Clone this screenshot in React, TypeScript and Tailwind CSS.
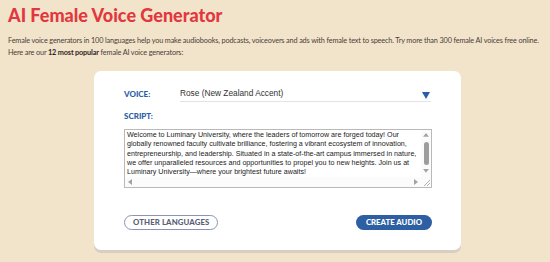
import React from "react";

const scriptLines = [
  "Welcome to Luminary University, where the leaders of tomorrow are forged today! Our",
  "globally renowned faculty cultivate brilliance, fostering a vibrant ecosystem of innovation,",
  "entrepreneurship, and leadership. Situated in a state-of-the-art campus immersed in nature,",
  "we offer unparalleled resources and opportunities to propel you to new heights. Join us at",
  "Luminary University\u2014where your brightest future awaits!",
];

// Fake textarea scrollbar pieces
const ScrollArrow: React.FC<{ dir: "up" | "down" | "left" | "right" }> = ({ dir }) => {
  const paths = {
    up: "M1 5 L4 1 L7 5 Z",
    down: "M1 2 L4 6 L7 2 Z",
    left: "M5 1 L1 4 L5 7 Z",
    right: "M2 1 L6 4 L2 7 Z",
  };
  return (
    <svg width="8" height="8" viewBox="0 0 8 8" className="block">
      <path d={paths[dir]} fill="#a3a3a3" />
    </svg>
  );
};

export default function App() {
  return (
    <div
      className="w-[550px] h-[262px] overflow-hidden bg-[#f2e4cb] px-2 pt-[4px]"
      style={{ fontFamily: "Lato, 'Open Sans', sans-serif" }}
    >
      <h1 className="text-[18px] leading-[22px] font-black text-[#e2383d]">
        AI Female Voice Generator
      </h1>
      <p className="mt-[9px] text-[7.3px] leading-[12px] tracking-[-0.15px] text-[#4b4038] whitespace-nowrap">
        Female voice generators in 100 languages help you make audiobooks, podcasts, voiceovers and ads with female text to speech. Try more than 300 female AI voices free online.
        <br />
        Here are our <b className="font-bold text-[#2f2620]">12 most popular</b> female AI voice generators:
      </p>

      <div className="ml-[86px] mt-[12px] w-[367px] h-[179px] rounded-[7px] bg-white shadow-[0_3px_0_#d8cfc2] px-[30px] pt-[15px]">
        {/* Voice select */}
        <div className="flex items-center gap-[27px]">
          <span className="text-[8px] font-black text-[#2b5ea8] w-[28px]">VOICE:</span>
          <div className="flex-1 flex items-center justify-between border-b border-[#dfe3ea] h-[16px] pb-[1px] ml-[1px]">
            <span
              className="text-[8.3px] text-[#333]"
              style={{ fontFamily: "'Liberation Sans', Arial, sans-serif" }}
            >
              Rose (New Zealand Accent)
            </span>
            <svg width="8" height="7" viewBox="0 0 8 7" className="mr-[1px] mt-[5px]">
              <path d="M0 0 H8 L4 7 Z" fill="#2b5ea8" />
            </svg>
          </div>
        </div>

        <div className="mt-[9px] text-[8px] leading-[10px] font-black text-[#2b5ea8]">SCRIPT:</div>

        {/* Script box */}
        <div className="mt-[8px] w-[308px] h-[59px] border border-[#b9b9b9] flex flex-col">
          <div className="flex flex-1 min-h-0">
            <div
              className="flex-1 px-[2px] pt-[1px] text-[7.15px] leading-[9.3px] text-[#222] overflow-hidden whitespace-nowrap"
              style={{ fontFamily: "'Liberation Sans', Arial, sans-serif" }}
            >
              {scriptLines.map((line, i) => (
                <div key={i}>{line}</div>
              ))}
            </div>
            <div className="w-[10px] flex flex-col items-center py-[2px] bg-[#fbfbfb]">
              <ScrollArrow dir="up" />
              <div className="w-[5px] h-[24px] my-[2px] rounded-[3px] bg-[#9d9d9d]" />
              <div className="flex-1" />
              <ScrollArrow dir="down" />
            </div>
          </div>
          <div className="h-[10px] flex items-center justify-between pl-[2px] bg-[#fbfbfb]">
            <ScrollArrow dir="left" />
            <div className="flex items-center">
              <ScrollArrow dir="right" />
              <svg width="10" height="10" viewBox="0 0 10 10" className="ml-[1px]">
                <path d="M9 3 L3 9 M9 6 L6 9" stroke="#b0b0b0" strokeWidth="1" />
              </svg>
            </div>
          </div>
        </div>

        {/* Actions */}
        <div className="mt-[27px] flex items-center justify-between w-[308px]">
          <button
            type="button"
            className="h-[15px] px-[8px] rounded-full border border-[#8d93b6] text-[7.8px] font-black text-[#5b5f78] tracking-[0.1px]"
          >
            OTHER LANGUAGES
          </button>
          <button
            type="button"
            className="h-[15px] w-[76px] rounded-full bg-[#2d5fa2] text-[7.8px] font-black text-white"
          >
            CREATE AUDIO
          </button>
        </div>
      </div>
    </div>
  );
}
